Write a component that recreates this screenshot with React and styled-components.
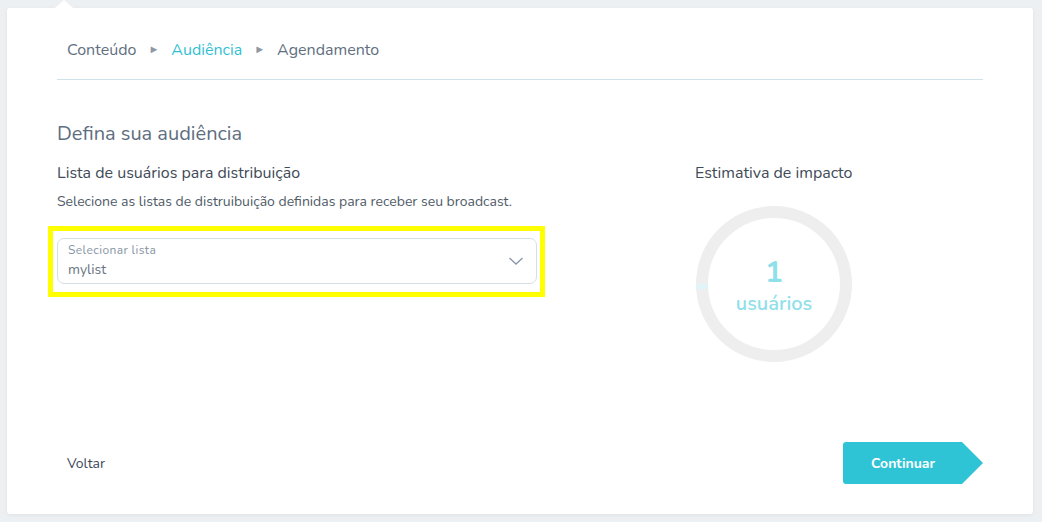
import React from "react";
import styled, { createGlobalStyle } from "styled-components";

const GlobalStyle = createGlobalStyle`
  body {
    margin: 0;
    background: #edf0f2;
    font-family: "Nunito", "Lato", "Open Sans", sans-serif;
  }
`;

const steps = [
  { label: "Conteúdo" },
  { label: "Audiência", active: true },
  { label: "Agendamento" },
];

export default function App() {
  return (
    <>
      <GlobalStyle />
      <Page>
        <Card>
          <Breadcrumb>
            {steps.map((step, i) => (
              <React.Fragment key={step.label}>
                {i > 0 && <Separator>►</Separator>}
                <Step $active={step.active}>{step.label}</Step>
              </React.Fragment>
            ))}
          </Breadcrumb>

          <Title>Defina sua audiência</Title>

          <Columns>
            <div>
              <SectionTitle>Lista de usuários para distribuição</SectionTitle>
              <Description>
                Selecione as listas de distruibuição definidas para receber seu broadcast.
              </Description>
              <Highlight>
                <SelectBox>
                  <SelectText>
                    <SelectLabel>Selecionar lista</SelectLabel>
                    <SelectValue>mylist</SelectValue>
                  </SelectText>
                  <Chevron width="16" height="10" viewBox="0 0 16 10">
                    <path d="M1.5 2 L8 8 L14.5 2" fill="none" stroke="#8a9aab" strokeWidth="1.4" />
                  </Chevron>
                </SelectBox>
              </Highlight>
            </div>

            <div>
              <SectionTitle>Estimativa de impacto</SectionTitle>
              <Gauge>
                <GaugeRing width="156" height="156" viewBox="0 0 156 156">
                  <circle cx="78" cy="78" r="72" fill="none" stroke="#eeeeee" strokeWidth="12" />
                  <circle
                    cx="78"
                    cy="78"
                    r="72"
                    fill="none"
                    stroke="#dff5f8"
                    strokeWidth="12"
                    strokeDasharray="5 500"
                    transform="rotate(176 78 78)"
                  />
                </GaugeRing>
                <GaugeValue>1</GaugeValue>
                <GaugeUnit>usuários</GaugeUnit>
              </Gauge>
            </div>
          </Columns>

          <Footer>
            <BackLink>Voltar</BackLink>
            <NextButton>Continuar</NextButton>
          </Footer>
        </Card>
      </Page>
    </>
  );
}

const Page = styled.div`
  padding: 8px 9px 8px 7px;
  height: 522px;
  box-sizing: border-box;
`;

const Card = styled.div`
  position: relative;
  height: 506px;
  box-sizing: border-box;
  background: #fff;
  border-radius: 3px;
  box-shadow: 0 1px 4px rgba(0, 0, 0, 0.06);
  padding: 0 50px 30px;
  display: flex;
  flex-direction: column;

  &::before {
    content: "";
    position: absolute;
    top: -8px;
    left: 48px;
    border-left: 9px solid transparent;
    border-right: 9px solid transparent;
    border-bottom: 8px solid #fff;
  }
`;

const Breadcrumb = styled.div`
  display: flex;
  align-items: center;
  gap: 12px;
  padding: 31px 10px 19px;
  border-bottom: 1px solid #cde3e8;
  line-height: 20px;
`;

const Step = styled.span`
  font-size: 16px;
  color: ${(p) => (p.$active ? "#33bfd3" : "#5f6f80")};
`;

const Separator = styled.span`
  font-size: 11px;
  color: #8e99a4;
  margin-top: 1px;
`;

const Title = styled.h1`
  margin: 42px 0 0;
  font-size: 20px;
  line-height: 24px;
  font-weight: 400;
  color: #5e6e80;
`;

const Columns = styled.div`
  display: grid;
  grid-template-columns: 480px 1fr;
  column-gap: 158px;
  margin-top: 17px;
`;

const SectionTitle = styled.h2`
  margin: 0;
  font-size: 16px;
  line-height: 20px;
  font-weight: 400;
  color: #404b57;
`;

const Description = styled.p`
  margin: 10px 0 15px;
  font-size: 14px;
  line-height: 18px;
  color: #4f5b67;
`;

const Highlight = styled.div`
  margin-left: -9px;
  width: 497px;
  box-sizing: border-box;
  border: 5px solid #ffff00;
  padding: 7px 3px 8px 4px;
`;

const SelectBox = styled.div`
  height: 46px;
  box-sizing: border-box;
  border: 1px solid #d3e1e7;
  border-radius: 7px;
  padding: 0 12px 0 10px;
  display: flex;
  align-items: center;
  justify-content: space-between;
`;

const SelectText = styled.div`
  display: flex;
  flex-direction: column;
`;

const SelectLabel = styled.span`
  font-size: 12px;
  line-height: 14px;
  letter-spacing: 0.4px;
  color: #8694a3;
`;

const SelectValue = styled.span`
  margin-top: 4px;
  font-size: 14px;
  line-height: 18px;
  color: #6a7480;
`;

const Chevron = styled.svg`
  display: block;
`;

const Gauge = styled.div`
  position: relative;
  width: 156px;
  height: 156px;
  box-sizing: border-box;
  padding-top: 2px;
  margin-top: 23px;
  margin-left: 1px;
  display: flex;
  flex-direction: column;
  align-items: center;
  justify-content: center;
  color: #8fe0ea;
`;

const GaugeRing = styled.svg`
  position: absolute;
  inset: 0;
`;

const GaugeValue = styled.span`
  font-size: 30px;
  line-height: 36px;
  font-weight: 700;
`;

const GaugeUnit = styled.span`
  margin-top: 1px;
  font-size: 20px;
  line-height: 24px;
  font-weight: 600;
`;

const Footer = styled.div`
  margin-top: auto;
  display: flex;
  align-items: center;
  justify-content: space-between;
`;

const BackLink = styled.span`
  margin-left: 10px;
  font-size: 14px;
  color: #3d4a59;
`;

const NextButton = styled.button`
  width: 140px;
  height: 42px;
  border: none;
  border-radius: 3px;
  padding: 0 20px 0 0;
  background: #2ec4d6;
  color: #fff;
  font-family: inherit;
  font-size: 14px;
  font-weight: 700;
  clip-path: polygon(0 0, 85% 0, 100% 50%, 85% 100%, 0 100%);
`;
